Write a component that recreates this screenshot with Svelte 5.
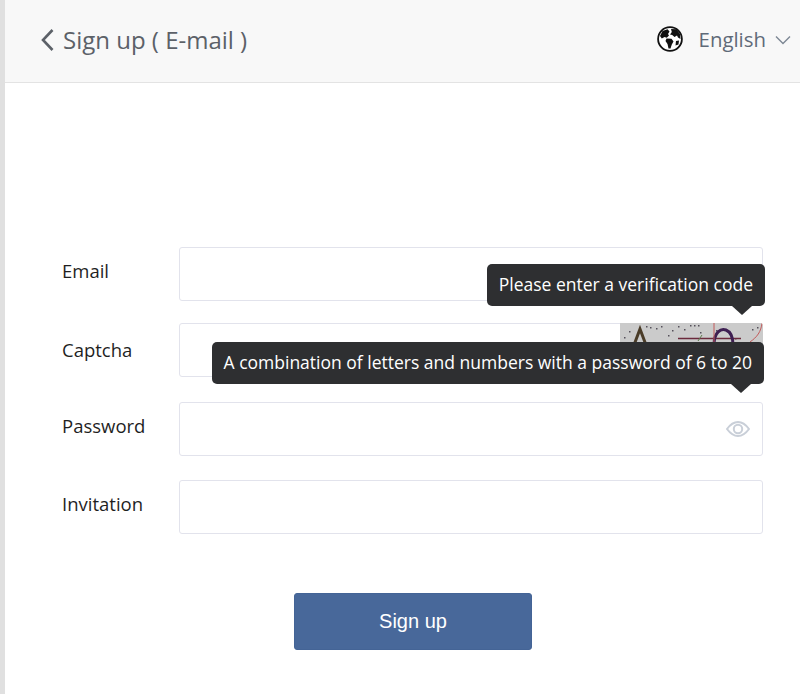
<script>
	const dots = [
		[624, 337], [629, 331], [646, 326], [650, 327], [656, 328], [661, 326], [668, 335], [672, 330], [678, 326],
		[684, 329], [690, 325], [694, 325], [698, 325], [700, 332], [716, 330], [735, 338], [752, 329], [757, 327]
	];
</script>

<div class="page">
	<header class="topbar">
		<div class="title">
			<svg class="back" viewBox="0 0 14 24" width="14" height="24">
				<path d="M12.500 2 L3 12 L12.500 22" />
			</svg>
			<span>Sign up ( E-mail )</span>
		</div>
		<div class="lang">
			<svg class="globe" viewBox="0 0 26 26" width="26" height="26">
				<circle cx="13" cy="13" r="11.900" />
				<path class="land" d="M5.500 5 L10.500 3.200 L12.500 5.500 L11 8 L12 9.500 L9.800 11.800 L7.500 11 L4.800 12.500 L3 10 Z" />
				<path class="land" d="M14 3 L19.500 3.200 L23 8 L23.500 13 L21 11.500 L20 9.500 L17.500 11 L15.200 9 L13 8.500 L14.800 6 Z" />
				<path class="land" d="M9.500 12.500 L14.500 12.800 L16.500 15.500 L14.800 18.500 L13.500 22.500 L11.500 22.500 L10.500 18 L8.500 15 Z" />
				<path class="land" d="M19 15 L22 14.500 L21.500 18.500 L18.500 19.500 Z" />
			</svg>
			<span class="lang-name">English</span>
			<svg class="caret" viewBox="0 0 16 10" width="16" height="10">
				<path d="M1 1.500 L8 8.500 L15 1.500" />
			</svg>
		</div>
	</header>

	<form class="form">
		<div class="row email">
			<label for="email">Email</label>
			<input id="email" type="text" />
		</div>

		<div class="row captcha">
			<label for="captcha">Captcha</label>
			<div class="field">
				<input id="captcha" type="text" />
				<svg class="code" viewBox="620 323 143 54" width="143" height="54">
					<rect x="620" y="323" width="143" height="54" fill="#cbcbcb" />
					{#each dots as d}
						<rect x={d[0]} y={d[1]} width="1.500" height="1.500" fill="#55505a" />
					{/each}
					<path d="M634 345 L640 329 L646 345" stroke="#4a3c28" stroke-width="3" fill="none" />
					<path d="M678 338.500 H741" stroke="#6b2a3c" stroke-width="1.500" fill="none" />
					<path d="M714 345 C714 332 721 328 726 330 C731 332 733 338 733 345" stroke="#3e1f52" stroke-width="3" fill="none" />
					<path d="M714 323 V345" stroke="#c25a5a" stroke-width="1" fill="none" />
					<path d="M750 342 C757 337 761 332 762 323" stroke="#c25a5a" stroke-width="1" fill="none" />
					<path d="M698 341 L702 335" stroke="#5c7a4c" stroke-width="1" fill="none" />
				</svg>
			</div>
			<div class="tip tip-code">Please enter a verification code</div>
			<div class="tip tip-pass">A combination of letters and numbers with a password of 6 to 20</div>
		</div>

		<div class="row password">
			<label for="password">Password</label>
			<div class="field">
				<input id="password" type="password" />
				<svg class="eye" viewBox="0 0 24 16" width="24" height="16">
					<path d="M1 8 C5 2.500 8.500 1 12 1 C15.500 1 19 2.500 23 8 C19 13.500 15.500 15 12 15 C8.500 15 5 13.500 1 8 Z" />
					<circle cx="12" cy="8" r="4.200" />
				</svg>
			</div>
		</div>

		<div class="row invitation">
			<label for="invitation">Invitation</label>
			<input id="invitation" type="text" />
		</div>

		<button class="submit" type="button">Sign up</button>
	</form>
</div>

<style>
	:global(body) {
		margin: 0;
		background: #fff;
	}
	.page {
		height: 694px;
		box-sizing: border-box;
		border-left: 5px solid #e0e0e0;
		font-family: "Open Sans", "Noto Sans", sans-serif;
		overflow: hidden;
	}
	.topbar {
		height: 83px;
		box-sizing: border-box;
		display: flex;
		align-items: center;
		justify-content: space-between;
		padding: 0 9px 3px 35px;
		background: #f8f8f8;
		border-bottom: 1px solid #e3e3e3;
	}
	.title {
		display: flex;
		align-items: center;
		gap: 9px;
		font-size: 24px;
		color: #5c6168;
	}
	.back path {
		fill: none;
		stroke: #5c6168;
		stroke-width: 2.600;
	}
	.lang {
		display: flex;
		align-items: center;
		font-size: 20.400px;
		color: #5f6a78;
	}
	.lang-name {
		margin-top: -2px;
	}
	.globe {
		margin: -1px 16px 0 0;
	}
	.globe circle {
		fill: #fff;
		stroke: #111;
		stroke-width: 1.800;
	}
	.land {
		fill: #111;
	}
	.caret {
		margin-left: 9px;
	}
	.caret path {
		fill: none;
		stroke: #7d8794;
		stroke-width: 1.400;
	}
	.form {
		display: flex;
		flex-direction: column;
		padding: 164px 37px 0 57px;
	}
	.row {
		position: relative;
		display: flex;
		align-items: center;
	}
	.row label {
		width: 117px;
		flex: none;
		font-size: 18.500px;
		color: #1f1f1f;
		padding-bottom: 7px;
	}
	.captcha {
		margin-top: 22px;
	}
	.captcha label {
		padding-bottom: 1px;
	}
	.password {
		margin-top: 25px;
	}
	.invitation {
		margin-top: 24px;
	}
	.field {
		position: relative;
		flex: 1;
		display: flex;
	}
	input {
		flex: 1;
		min-width: 0;
		height: 54px;
		box-sizing: border-box;
		border: 1px solid #e2e3ec;
		border-radius: 3px;
		background: #fff;
		outline: none;
	}
	.code {
		position: absolute;
		top: 0;
		right: 0;
		border-radius: 0 3px 3px 0;
	}
	.eye {
		position: absolute;
		right: 13px;
		top: 19px;
	}
	.eye path,
	.eye circle {
		fill: none;
		stroke: #c9cfd8;
		stroke-width: 2;
	}
	.tip {
		position: absolute;
		right: -2px;
		height: 42px;
		box-sizing: border-box;
		display: flex;
		align-items: center;
		padding: 0 12px 2px;
		border-radius: 5px;
		background: #2e2f31;
		color: #fff;
		font-size: 17.500px;
		white-space: nowrap;
	}
	.tip::after {
		content: "";
		position: absolute;
		right: 13px;
		bottom: -9px;
		border-left: 10px solid transparent;
		border-right: 10px solid transparent;
		border-top: 9px solid #2e2f31;
	}
	.tip-code {
		top: -59px;
	}
	.tip-pass {
		top: 19px;
		right: -1px;
	}
	.submit {
		align-self: flex-start;
		width: 238px;
		height: 57px;
		margin: 59px 0 0 232px;
		border: 1px solid #446496;
		border-radius: 3px;
		background: #48689a;
		color: #fff;
		font-family: "Liberation Sans", Arial, sans-serif;
		font-size: 20px;
	}
</style>
